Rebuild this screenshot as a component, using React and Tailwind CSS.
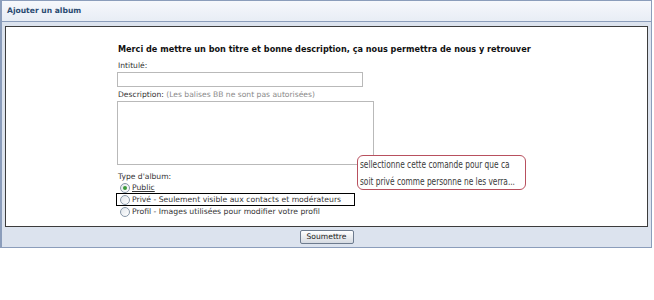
import React from "react";

function Radio({ checked }) {
  return (
    <span className="relative inline-block w-[10px] h-[10px] rounded-full border border-[#8797a8] bg-gradient-to-br from-[#e1e6eb] to-white shrink-0">
      {checked && (
        <span className="absolute left-[2px] top-[2px] w-[4px] h-[4px] rounded-full bg-[#3a9a3a]" />
      )}
    </span>
  );
}

export default function App() {
  return (
    <div className="w-[654px] h-[300px] bg-white font-['DejaVu_Sans',Verdana,sans-serif]">
      {/* Panneau */}
      <div className="w-[652px] border border-[#8b9dbb] border-l-2">
        <div className="h-[21px] flex items-center px-[5px] bg-gradient-to-b from-[#f6f8fc] to-[#e8edf5] border-b border-[#8b9dbb]">
          <span className="text-[7.6px] font-bold text-[#2b4b72]">Ajouter un album</span>
        </div>

        <div className="bg-[#dce3ee] px-[3px] pt-[4px]">
          <div className="relative h-[201px] bg-white border border-[#3c3c3c] pl-[112px] pt-[16px]">
            <p className="text-[8.15px] font-bold text-[#111] leading-[12px] whitespace-nowrap">
              Merci de mettre un bon titre et bonne description, ça nous permettra de nous y retrouver
            </p>

            <div className="mt-[6px] text-[7.6px] text-[#333] leading-[10px]">Intitulé:</div>
            <div className="mt-[1px] ml-[-1px] w-[246px] h-[15px] border border-[#b9b9b9] bg-white" />

            <div className="mt-[3px] text-[7.6px] leading-[10px] text-[#333]">
              Description: <span className="text-[#8a8a8a]">(Les balises BB ne sont pas autorisées)</span>
            </div>
            <div className="mt-[1px] ml-[-1px] w-[257px] h-[64px] border border-[#b9b9b9] bg-white" />

            <div className="mt-[7px] text-[7.6px] leading-[10px] text-[#333]">Type d'album:</div>
            <div className="flex items-center gap-[2px] ml-[2px] h-[11px] text-[7.7px] text-[#333]">
              <Radio checked />
              <span className="underline">Public</span>
            </div>
            <div className="flex items-center gap-[2px] ml-[-2px] pl-[3px] w-[239px] h-[13px] border border-black text-[7.7px] text-[#333]">
              <Radio />
              <span>Privé - Seulement visible aux contacts et modérateurs</span>
            </div>
            <div className="flex items-center gap-[2px] ml-[2px] h-[11px] text-[7.7px] text-[#333]">
              <Radio />
              <span>Profil - Images utilisées pour modifier votre profil</span>
            </div>

            {/* Annotation */}
            <div className="absolute left-[351px] top-[128px] w-[169px] h-[35px] rounded-[6px] border border-[#b8505e] bg-white px-[2px] text-[11px] leading-[17px] text-[#3a3a3a] whitespace-nowrap overflow-hidden">
              <div className="origin-left scale-x-[0.75] font-stretch-condensed">sellectionne cette comande pour que ca</div>
              <div className="origin-left scale-x-[0.75] font-stretch-condensed">soit privé comme personne ne les verra...</div>
            </div>
          </div>

          <div className="h-[20px] flex items-center justify-center">
            <button className="w-[54px] h-[14px] border border-[#6d7b8e] rounded-[2px] bg-gradient-to-b from-white to-[#d6dbe2] text-[7.6px] text-[#222] leading-none">
              Soumettre
            </button>
          </div>
        </div>
      </div>
    </div>
  );
}
